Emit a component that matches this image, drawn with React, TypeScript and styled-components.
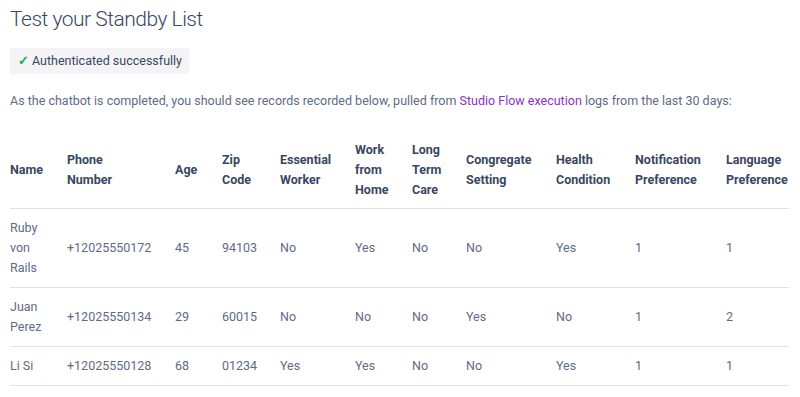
import React from "react";
import styled, { createGlobalStyle } from "styled-components";

const GlobalStyle = createGlobalStyle`
  body {
    margin: 0;
    background: #ffffff;
    font-family: Roboto, "Liberation Sans", sans-serif;
  }
`;

type Record = {
  name: string;
  phone: string;
  age: number;
  zip: string;
  essential: string;
  wfh: string;
  ltc: string;
  congregate: string;
  health: string;
  notification: number;
  language: number;
};

// labels use "\n" where the header wraps in the original layout
const columns: { label: string; width: number }[] = [
  { label: "Name", width: 57 },
  { label: "Phone\nNumber", width: 108 },
  { label: "Age", width: 47 },
  { label: "Zip Code", width: 58 },
  { label: "Essential Worker", width: 75 },
  { label: "Work from Home", width: 57 },
  { label: "Long Term Care", width: 54 },
  { label: "Congregate Setting", width: 90 },
  { label: "Health Condition", width: 79 },
  { label: "Notification Preference", width: 91 },
  { label: "Language Preference", width: 63 },
];

const records: Record[] = [
  {
    name: "Ruby von Rails",
    phone: "+12025550172",
    age: 45,
    zip: "94103",
    essential: "No",
    wfh: "Yes",
    ltc: "No",
    congregate: "No",
    health: "Yes",
    notification: 1,
    language: 1,
  },
  {
    name: "Juan Perez",
    phone: "+12025550134",
    age: 29,
    zip: "60015",
    essential: "No",
    wfh: "No",
    ltc: "No",
    congregate: "Yes",
    health: "No",
    notification: 1,
    language: 2,
  },
  {
    name: "Li Si",
    phone: "+12025550128",
    age: 68,
    zip: "01234",
    essential: "Yes",
    wfh: "Yes",
    ltc: "No",
    congregate: "No",
    health: "Yes",
    notification: 1,
    language: 1,
  },
];

export default function App() {
  return (
    <>
      <GlobalStyle />
      <Page>
        <Title>Test your Standby List</Title>
        <Badge>
          <Check>✓</Check>
          Authenticated successfully
        </Badge>
        <Intro>
          As the chatbot is completed, you should see records recorded below, pulled from{" "}
          <Link href="#">Studio Flow execution</Link> logs from the last 30 days:
        </Intro>
        <Table>
          <colgroup>
            {columns.map((c) => (
              <col key={c.label} style={{ width: c.width }} />
            ))}
          </colgroup>
          <thead>
            <tr>
              {columns.map((c) => (
                <Th key={c.label}>{c.label}</Th>
              ))}
            </tr>
          </thead>
          <tbody>
            {records.map((r) => (
              <tr key={r.phone}>
                <Td>{r.name}</Td>
                <Td>{r.phone}</Td>
                <Td>{r.age}</Td>
                <Td>{r.zip}</Td>
                <Td>{r.essential}</Td>
                <Td>{r.wfh}</Td>
                <Td>{r.ltc}</Td>
                <Td>{r.congregate}</Td>
                <Td>{r.health}</Td>
                <Td>{r.notification}</Td>
                <Td>{r.language}</Td>
              </tr>
            ))}
          </tbody>
        </Table>
      </Page>
    </>
  );
}

const Page = styled.div`
  padding: 4px 11px 0 10px;
  color: #606b85;
  font-size: 12.5px;
  line-height: 20px;
`;

const Title = styled.h1`
  margin: 0 0 14px;
  font-size: 21px;
  line-height: 30px;
  font-weight: 300;
  letter-spacing: -0.5px;
  color: #394762;
`;

const Badge = styled.div`
  display: inline-flex;
  align-items: center;
  gap: 3px;
  height: 26px;
  padding: 0 7px 0 8px;
  background: #f4f4f6;
  color: #394762;
`;

const Check = styled.span`
  color: #14b053;
  font-weight: 700;
`;

const Intro = styled.p`
  margin: 17px 0 0;
  font-size: 12.5px;
`;

const Link = styled.a`
  color: #8d31c8;
  text-decoration: none;
`;

const Table = styled.table`
  width: 779px;
  margin-top: 17px;
  border-collapse: collapse;
  table-layout: fixed;
`;

const Th = styled.th`
  padding: 12px 8px 8px 0;
  text-align: left;
  vertical-align: middle;
  white-space: pre-line;
  font-weight: 700;
  color: #394762;
  border-bottom: 1px solid #e1e3ea;
  &:last-child {
    padding-right: 0;
  }
`;

const Td = styled.td`
  padding: 9px 8px 9px 0;
  text-align: left;
  vertical-align: middle;
  border-bottom: 1px solid #e1e3ea;
  &:last-child {
    padding-right: 0;
  }
`;
